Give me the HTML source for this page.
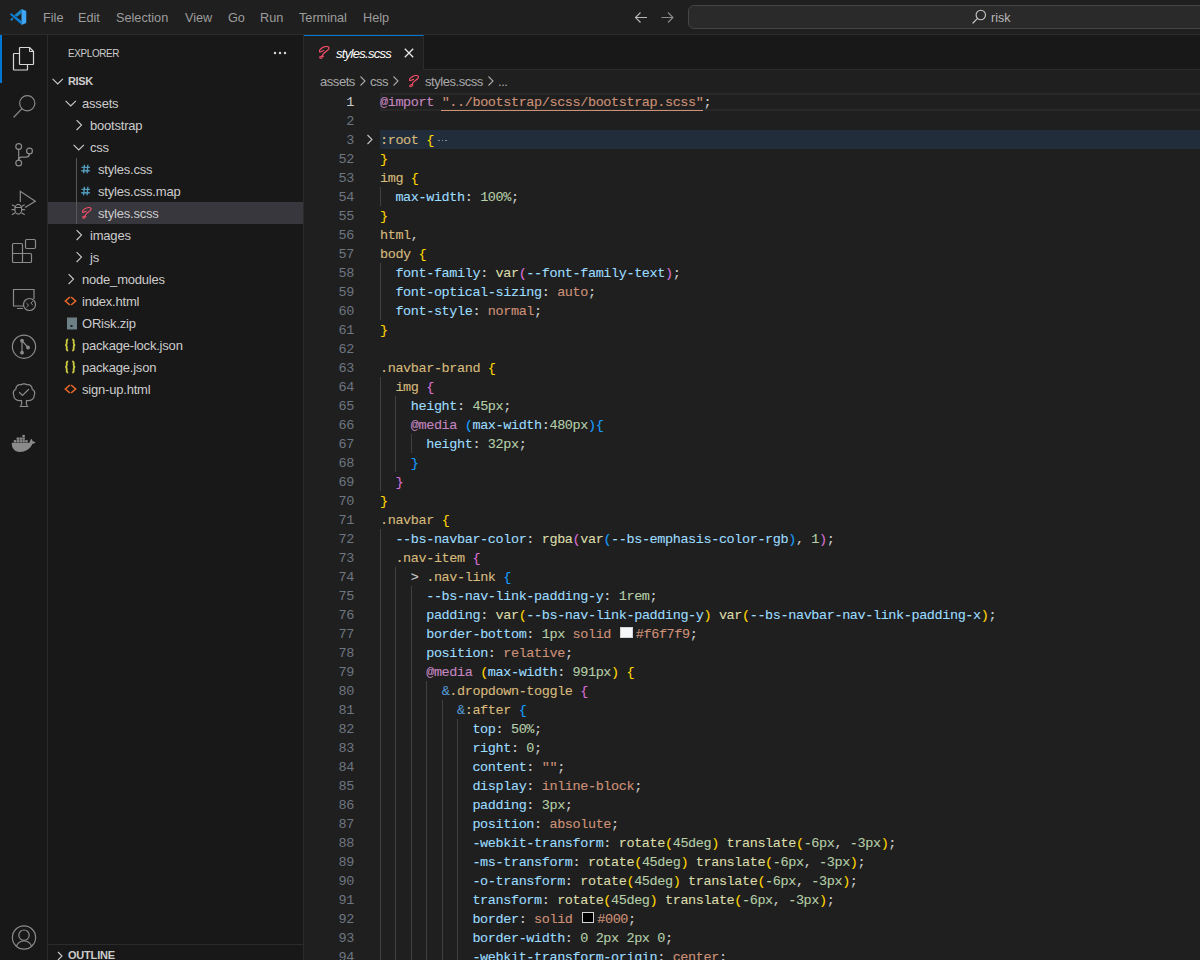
<!DOCTYPE html>
<html><head><meta charset="utf-8">
<style>
*{margin:0;padding:0;box-sizing:border-box}
html,body{width:1200px;height:960px;overflow:hidden;background:#1f1f1f}
body{font-family:"Liberation Sans",sans-serif;color:#cccccc;position:relative}
.abs{position:absolute}
svg{position:absolute;overflow:visible}
#title{left:0;top:0;width:1200px;height:35px;background:#1f1f1f;border-bottom:1px solid #2b2b2b}
#title .m{position:absolute;top:11px;font-size:12.7px;color:#9d9d9d;line-height:15px}
#search{position:absolute;left:688px;top:5px;width:540px;height:24px;border:1px solid #454545;border-radius:6px;background:#2a2a2a}
#act{left:0;top:35px;width:48px;height:925px;background:#181818;border-right:1px solid #2b2b2b}
#side{left:48px;top:35px;width:256px;height:925px;background:#181818;border-right:1px solid #2b2b2b}
#tabs{left:304px;top:35px;width:896px;height:35px;background:#181818;border-bottom:1px solid #2b2b2b}
#tab{position:absolute;left:0;top:0;width:120px;height:35px;background:#1f1f1f;border-top:1px solid #0078d4;border-right:1px solid #2b2b2b}
#bc{left:304px;top:70px;width:896px;height:22px;background:#1f1f1f}
#ed{left:304px;top:92px;width:896px;height:868px;background:#1f1f1f;overflow:hidden}
.row{position:absolute;left:0;width:255px;height:22px;font-size:13px;line-height:22px;color:#cccccc;white-space:nowrap;letter-spacing:-0.2px}
.ln{position:absolute;left:0;width:50px;text-align:right;font-family:"Liberation Mono",monospace;font-size:13.5px;letter-spacing:-0.4px;color:#6e7681;height:19px;line-height:20px;padding-top:1px}
.ln.act{color:#cccccc}
.cl{position:absolute;left:76px;font-family:"Liberation Mono",monospace;font-size:13.5px;letter-spacing:-0.4px;height:19px;line-height:20px;padding-top:1px;white-space:pre;color:#cccccc;-webkit-text-stroke:0.1px}
.ig{position:absolute;width:1px;height:19px;background:#404040}
.p{color:#9cdcfe}.s{color:#ce9178}.n{color:#b5cea8}.f{color:#dcdcaa}.t{color:#d7ba7d}.k{color:#c586c0}.b{color:#569cd6}
.g{color:#ffd700}.o{color:#da70d6}.u{color:#179fff}
.su{color:#ce9178}
.sw{display:inline-block;width:12.5px;height:11.5px;border:1px solid #d4d4d4;margin:0 3px 0 1.5px;vertical-align:0px}
.fold{display:inline-block;width:14px;height:10px;position:relative}.fold b{position:absolute;top:5.6px;width:1.6px;height:1.6px;background:#8b8b8b}.fold b:nth-child(1){left:4px}.fold b:nth-child(2){left:7.8px}.fold b:nth-child(3){left:11.5px}
.sh{position:absolute;font-size:11px;line-height:14px;color:#cccccc;letter-spacing:-0.65px}
.sh.b{font-weight:bold;letter-spacing:-0.2px}
.row .tx{position:absolute;top:1px}
.sel{background:#37373d}
.bt{position:absolute;top:1px;font-size:13px;line-height:22px;color:#a9a9a9;letter-spacing:-0.45px}
#lh{position:absolute;left:76px;top:1px;width:820px;height:18px;border:2px solid #282828;border-right:none}
#fb{position:absolute;left:76px;top:38px;width:820px;height:19px;background:#212d3a}
#ul{position:absolute;left:137px;top:18px;width:262px;height:1px;background:#ce9178}
.ai{fill:none;stroke:#8b8b8b;stroke-width:1.2}
</style></head><body>
<svg width="0" height="0" style="position:absolute"><defs>
<symbol id="scss" viewBox="0 0 11 13"><path d="M4.8 4.5 C3.2 4.8 0.7 6.8 0.4 5.3 C0.2 3.6 4 0.6 7.3 0.5 C10.2 0.4 10.7 2.3 9 3.9 C7.5 5.3 5.3 6.4 4.1 8.1 C3.3 9.3 3.9 10.8 2.9 11.8 C2.1 12.6 0.7 12.4 0.8 11.3 C0.9 10.2 2.8 9.8 4.2 10.4" stroke="#f14e67" stroke-width="1.2" fill="none" stroke-linecap="round"/></symbol>
<symbol id="hash" viewBox="0 0 10 10"><path d="M3.6 0.5 L2.8 9.5 M7.2 0.5 L6.4 9.5 M0.5 3.3 H9.5 M0.3 6.8 H9.3" stroke="#519aba" stroke-width="1.5" fill="none"/></symbol>
</defs></svg>
<div id="title" class="abs">
  <svg style="left:6px;top:6px" width="24" height="24" viewBox="0 0 24 24">
    <polygon points="15.5,3 15.5,7.25 11,10.75 8.25,9.25" fill="#1a86c8"/>
    <polygon points="4.25,13.5 5.75,15 7.5,12.5 6.25,11.5" fill="#1a86c8"/>
    <polygon points="5,7 15.5,15 15.5,18.75 4,8.5" fill="#0b7fd9"/>
    <polygon points="15.5,3 20.25,5 20.25,17 15.5,19" fill="#3ea6f5"/>
  </svg>
  <span class="m" style="left:43px">File</span>
  <span class="m" style="left:78px">Edit</span>
  <span class="m" style="left:116px">Selection</span>
  <span class="m" style="left:185px">View</span>
  <span class="m" style="left:228px">Go</span>
  <span class="m" style="left:260px">Run</span>
  <span class="m" style="left:299px">Terminal</span>
  <span class="m" style="left:363px">Help</span>
  <svg style="left:634px;top:10px" width="16" height="16"><path d="M1.5 7.5 H13 M6.5 2.5 L1.5 7.5 L6.5 12.5" stroke="#b8b8b8" stroke-width="1.1" fill="none"/></svg>
  <svg style="left:660px;top:10px" width="16" height="16"><path d="M1.5 7.5 H13 M8 2.5 L13 7.5 L8 12.5" stroke="#8a8a8a" stroke-width="1.1" fill="none"/></svg>
  <div id="search">
    <svg style="left:282px;top:3px" width="16" height="16"><circle cx="9.8" cy="6" r="4.7" stroke="#c8c8c8" stroke-width="1.1" fill="none"/><path d="M6.5 9.4 L2 14" stroke="#c8c8c8" stroke-width="1.2" stroke-linecap="round"/></svg>
    <span style="position:absolute;left:302px;top:5px;font-size:12.5px;line-height:15px;color:#b8b8b8">risk</span>
  </div>
</div>
<div id="act" class="abs">

<div style="position:absolute;left:0;top:0;width:2px;height:48px;background:#0078d4"></div>
<svg style="left:0;top:-35px" width="48" height="960" viewBox="0 0 48 960">
 <g fill="none" stroke="#d7d7d7" stroke-width="1.2" stroke-linejoin="round">
  <path d="M19.5 53.5 H14 Q13.5 53.5 13.5 54 V69.5 Q13.5 70 14 70 H27 Q27.5 70 27.5 69.5 V64.5"/>
  <path d="M20 47.5 H29.5 L33.5 51.5 V64 Q33.5 64.5 33 64.5 H20 Q19.5 64.5 19.5 64 V48 Q19.5 47.5 20 47.5 Z"/>
  <path d="M29.5 47.5 V51.5 H33.5" stroke-width="1"/>
 </g>
 <g class="ai" stroke-linecap="round">
  <circle cx="27.25" cy="103.25" r="7.6"/>
  <path d="M21.8 108.8 L14 117"/>
  <circle cx="18.7" cy="146.5" r="2.9"/>
  <circle cx="29.5" cy="151" r="2.9"/>
  <circle cx="18.7" cy="163" r="2.9"/>
  <path d="M18.7 149.4 V160.1"/>
  <path d="M29.5 153.9 C29.3 156 28 157.2 25.5 157.2 H21.7 C19.8 157.2 18.7 158.3 18.7 160"/>
  <path d="M20.3 201.5 V191.3 L35.3 201.3 L25.5 207.3"/>
  <ellipse cx="18.3" cy="209.3" rx="3.4" ry="4.9"/>
  <path d="M15 207.5 H21.6 M12.3 205 L14.8 206.3 M24.3 205 L21.8 206.3 M12 209.7 H14.6 M24.6 209.7 H22 M12.3 214.5 L14.8 213 M24.3 214.5 L21.8 213"/>
  <path d="M12.5 253.5 V261.5 Q12.5 262.5 13.5 262.5 H30.5 Q31.5 262.5 31.5 261.5 V254.5 Q31.5 253.5 30.5 253.5 H12.5 M12.5 253.5 V244.5 Q12.5 243.5 13.5 243.5 H21.5 Q22.5 243.5 22.5 244.5 V262.5"/>
  <rect x="25.5" y="239.5" width="10" height="9" rx="1.2"/>
  <path d="M23 306 H13.5 V289.5 H34 V298.5"/>
  <path d="M17.5 308.5 H22.5"/>
  <circle cx="29.5" cy="304.5" r="6"/>
  <path d="M26.8 303.4 L28.6 305.1 L26.8 306.8 M32.6 301.4 L30.8 303.1 L32.6 304.8" stroke-width="1"/>
  <circle cx="24" cy="346.7" r="11.6"/>
  <path d="M22 340.7 V352.7 M22 340.7 L28 347.5"/>
  <path d="M21.5 400.5 C17 401 13.5 399 13.8 395.5 C12.8 393 13.5 390.5 15.8 389.3 C15.8 386 18.5 384 21 384.8 C22 383.6 26 383.6 27 384.8 C29.5 384 32.2 386 32.2 389.3 C34.5 390.5 35.2 393 34.2 395.5 C34.5 399 31 401 26.5 400.5 C26 402.5 26 404.5 27.5 406.5 H20.5 C22 404.5 22 402.5 21.5 400.5 Z"/>
  <path d="M19.5 392.5 L22.5 395.5 L28.5 389.5"/>
  <circle cx="24" cy="937.5" r="11.6"/>
  <circle cx="24" cy="935.2" r="5.2"/>
  <path d="M16.5 946 C18 942.5 20.5 941 24 941 C27.5 941 30 942.5 31.5 946"/>
 </g>
 <g fill="#8b8b8b">
  <circle cx="22" cy="340.7" r="1.9"/><circle cx="28" cy="347.5" r="1.9"/><circle cx="22" cy="352.7" r="1.9"/>
  <path d="M11.75 442.8 H29.5 C30 441 30.5 439.5 31.5 438.8 C32.3 440 32.6 441 33 441.6 C34 441.6 35 441.8 35.5 442.5 C34.5 443.5 33.5 443.8 32.5 443.8 C30 449.5 25 452 20 452 C14.5 452 11.5 448 11.75 442.8 Z"/><rect x="13.8" y="440.1" width="2.45" height="2.3"/><rect x="16.65" y="440.1" width="2.45" height="2.3"/><rect x="19.5" y="440.1" width="2.45" height="2.3"/><rect x="22.35" y="440.1" width="2.45" height="2.3"/><rect x="25.2" y="440.1" width="2.45" height="2.3"/><rect x="16.65" y="437.5" width="2.45" height="2.3"/><rect x="19.5" y="437.5" width="2.45" height="2.3"/><rect x="22.35" y="437.5" width="2.45" height="2.3"/><rect x="22.35" y="434.9" width="2.45" height="2.3"/>
 </g>
</svg>

</div>
<div id="side" class="abs">
  <div class="sh" style="left:20px;top:11px;letter-spacing:-0.4px;transform:scaleX(0.9);transform-origin:0 0">EXPLORER</div>
  <svg style="left:225px;top:16px" width="14" height="4"><circle cx="2" cy="2" r="1.25" fill="#d0d0d0"/><circle cx="7" cy="2" r="1.25" fill="#d0d0d0"/><circle cx="12" cy="2" r="1.25" fill="#d0d0d0"/></svg>
  <div class="row" style="top:35px"><svg style="left:4px;top:0px" width="12" height="22"><path d="M0.6 8.9 L5.75 14 L10.9 8.9" stroke="#cccccc" stroke-width="1.1" fill="none"/></svg><span class="tx" style="left:20px;font-size:11px;font-weight:bold;top:0;letter-spacing:-0.4px">RISK</span></div>
<div class="row" style="top:57px"><svg style="left:17px;top:0px" width="12" height="22"><path d="M0.6 8.9 L5.75 14 L10.9 8.9" stroke="#cccccc" stroke-width="1.1" fill="none"/></svg><span class="tx" style="left:34px;">assets</span></div>
<div class="row" style="top:79px"><svg style="left:25px;top:0px" width="12" height="22"><path d="M3.6 6.2 L8.5 11.1 L3.6 16" stroke="#cccccc" stroke-width="1.1" fill="none"/></svg><span class="tx" style="left:42px;">bootstrap</span></div>
<div class="row" style="top:101px"><svg style="left:25px;top:0px" width="12" height="22"><path d="M0.6 8.9 L5.75 14 L10.9 8.9" stroke="#cccccc" stroke-width="1.1" fill="none"/></svg><span class="tx" style="left:42px;">css</span></div>
<div class="row" style="top:123px"><svg style="left:33.3px;top:6px" width="9.5" height="10"><use href="#hash"/></svg><span class="tx" style="left:50px;">styles.css</span></div>
<div class="row" style="top:145px"><svg style="left:33.3px;top:6px" width="9.5" height="10"><use href="#hash"/></svg><span class="tx" style="left:50px;">styles.css.map</span></div>
<div class="row sel" style="top:167px"><svg style="left:33.5px;top:5px" width="10" height="12"><use href="#scss"/></svg><span class="tx" style="left:50px;">styles.scss</span></div>
<div class="row" style="top:189px"><svg style="left:25px;top:0px" width="12" height="22"><path d="M3.6 6.2 L8.5 11.1 L3.6 16" stroke="#cccccc" stroke-width="1.1" fill="none"/></svg><span class="tx" style="left:42px;">images</span></div>
<div class="row" style="top:211px"><svg style="left:25px;top:0px" width="12" height="22"><path d="M3.6 6.2 L8.5 11.1 L3.6 16" stroke="#cccccc" stroke-width="1.1" fill="none"/></svg><span class="tx" style="left:42px;">js</span></div>
<div class="row" style="top:233px"><svg style="left:17px;top:0px" width="12" height="22"><path d="M3.6 6.2 L8.5 11.1 L3.6 16" stroke="#cccccc" stroke-width="1.1" fill="none"/></svg><span class="tx" style="left:34px;">node_modules</span></div>
<div class="row" style="top:255px"><svg style="left:0;top:0" width="30" height="22"><path d="M21.9 7 L17.4 11 L21.9 15 M23.1 7 L27.6 11 L23.1 15" stroke="#e8682a" stroke-width="1.6" fill="none"/></svg><span class="tx" style="left:34px;">index.html</span></div>
<div class="row" style="top:277px"><svg style="left:18px;top:5px" width="12" height="13" viewBox="0 0 12 13"><rect x="1" y="0.5" width="10" height="12" fill="#6d8086"/><rect x="4.5" y="8" width="2" height="2" fill="#1c1c1c"/></svg><span class="tx" style="left:34px;">ORisk.zip</span></div>
<div class="row" style="top:299px"><svg style="left:0;top:0" width="30" height="22"><path d="M20.2 5.4 C18.9 5.4 18.7 6 18.7 7.2 V9.6 C18.7 10.4 18 11 17.2 11 C18 11 18.7 11.6 18.7 12.4 V14.8 C18.7 16 18.9 16.6 20.2 16.6 M24.2 5.4 C25.5 5.4 25.7 6 25.7 7.2 V9.6 C25.7 10.4 26.4 11 27.2 11 C26.4 11 25.7 11.6 25.7 12.4 V14.8 C25.7 16 25.5 16.6 24.2 16.6" stroke="#cbcb41" stroke-width="1.8" fill="none"/></svg><span class="tx" style="left:34px;">package-lock.json</span></div>
<div class="row" style="top:321px"><svg style="left:0;top:0" width="30" height="22"><path d="M20.2 5.4 C18.9 5.4 18.7 6 18.7 7.2 V9.6 C18.7 10.4 18 11 17.2 11 C18 11 18.7 11.6 18.7 12.4 V14.8 C18.7 16 18.9 16.6 20.2 16.6 M24.2 5.4 C25.5 5.4 25.7 6 25.7 7.2 V9.6 C25.7 10.4 26.4 11 27.2 11 C26.4 11 25.7 11.6 25.7 12.4 V14.8 C25.7 16 25.5 16.6 24.2 16.6" stroke="#cbcb41" stroke-width="1.8" fill="none"/></svg><span class="tx" style="left:34px;">package.json</span></div>
<div class="row" style="top:343px"><svg style="left:0;top:0" width="30" height="22"><path d="M21.9 7 L17.4 11 L21.9 15 M23.1 7 L27.6 11 L23.1 15" stroke="#e8682a" stroke-width="1.6" fill="none"/></svg><span class="tx" style="left:34px;">sign-up.html</span></div>
<div style="position:absolute;left:28px;top:123px;width:1px;height:66px;background:#585858"></div>
  <div style="position:absolute;left:0;top:909px;width:255px;height:1px;background:#2b2b2b"></div>
  <svg style="left:6px;top:915px" width="12" height="12"><path d="M4 2 L8 6 L4 10" stroke="#ccc" stroke-width="1.1" fill="none"/></svg>
  <div class="sh b" style="left:20px;top:913px">OUTLINE</div>
</div>
<div id="tabs" class="abs"><div id="tab">
  <svg style="left:15px;top:10.25px" width="11" height="13"><use href="#scss"/></svg>
  <span style="position:absolute;left:32px;top:10px;font-size:13px;line-height:16px;font-style:italic;color:#ffffff;letter-spacing:-0.7px">styles.scss</span>
  <svg style="left:100px;top:12px" width="10" height="10"><path d="M0.8 0.8 L9.2 9.2 M9.2 0.8 L0.8 9.2" stroke="#e8e8e8" stroke-width="1.3"/></svg>
</div></div>
<div id="bc" class="abs">
  <span class="bt" style="left:16px">assets</span>
  <svg style="left:54px;top:3px" width="10" height="17"><path d="M2.5 3.5 L7 8 L2.5 12.5" stroke="#a9a9a9" stroke-width="1.1" fill="none"/></svg>
  <span class="bt" style="left:66px">css</span>
  <svg style="left:87px;top:3px" width="10" height="17"><path d="M2.5 3.5 L7 8 L2.5 12.5" stroke="#a9a9a9" stroke-width="1.1" fill="none"/></svg>
  <svg style="left:105px;top:5px" width="10.5" height="12.5"><use href="#scss"/></svg>
  <span class="bt" style="left:121px">styles.scss</span>
  <svg style="left:182px;top:3px" width="10" height="17"><path d="M2.5 3.5 L7 8 L2.5 12.5" stroke="#a9a9a9" stroke-width="1.1" fill="none"/></svg>
  <span class="bt" style="left:194px">...</span>
</div>
<div id="ed" class="abs">
<div id="lh"></div><div id="fb"></div><div id="ul"></div>
<svg style="left:60px;top:38px" width="12" height="19"><path d="M3.5 5 L8 9.5 L3.5 14" stroke="#c5c5c5" stroke-width="1.1" fill="none"/></svg>
<i class="ig" style="left:76px;top:95px"></i>
<i class="ig" style="left:76px;top:171px"></i>
<i class="ig" style="left:76px;top:190px"></i>
<i class="ig" style="left:76px;top:209px"></i>
<i class="ig" style="left:76px;top:285px"></i>
<i class="ig" style="left:76px;top:304px"></i>
<i class="ig" style="left:91px;top:304px"></i>
<i class="ig" style="left:76px;top:323px"></i>
<i class="ig" style="left:91px;top:323px"></i>
<i class="ig" style="left:76px;top:342px"></i>
<i class="ig" style="left:91px;top:342px"></i>
<i class="ig" style="left:107px;top:342px"></i>
<i class="ig" style="left:76px;top:361px"></i>
<i class="ig" style="left:91px;top:361px"></i>
<i class="ig" style="left:76px;top:380px"></i>
<i class="ig" style="left:76px;top:437px"></i>
<i class="ig" style="left:76px;top:456px"></i>
<i class="ig" style="left:76px;top:475px"></i>
<i class="ig" style="left:91px;top:475px"></i>
<i class="ig" style="left:76px;top:494px"></i>
<i class="ig" style="left:91px;top:494px"></i>
<i class="ig" style="left:107px;top:494px"></i>
<i class="ig" style="left:76px;top:513px"></i>
<i class="ig" style="left:91px;top:513px"></i>
<i class="ig" style="left:107px;top:513px"></i>
<i class="ig" style="left:76px;top:532px"></i>
<i class="ig" style="left:91px;top:532px"></i>
<i class="ig" style="left:107px;top:532px"></i>
<i class="ig" style="left:76px;top:551px"></i>
<i class="ig" style="left:91px;top:551px"></i>
<i class="ig" style="left:107px;top:551px"></i>
<i class="ig" style="left:76px;top:570px"></i>
<i class="ig" style="left:91px;top:570px"></i>
<i class="ig" style="left:107px;top:570px"></i>
<i class="ig" style="left:76px;top:589px"></i>
<i class="ig" style="left:91px;top:589px"></i>
<i class="ig" style="left:107px;top:589px"></i>
<i class="ig" style="left:122px;top:589px"></i>
<i class="ig" style="left:76px;top:608px"></i>
<i class="ig" style="left:91px;top:608px"></i>
<i class="ig" style="left:107px;top:608px"></i>
<i class="ig" style="left:122px;top:608px"></i>
<i class="ig" style="left:138px;top:608px"></i>
<i class="ig" style="left:76px;top:627px"></i>
<i class="ig" style="left:91px;top:627px"></i>
<i class="ig" style="left:107px;top:627px"></i>
<i class="ig" style="left:122px;top:627px"></i>
<i class="ig" style="left:138px;top:627px"></i>
<i class="ig" style="left:153px;top:627px"></i>
<i class="ig" style="left:76px;top:646px"></i>
<i class="ig" style="left:91px;top:646px"></i>
<i class="ig" style="left:107px;top:646px"></i>
<i class="ig" style="left:122px;top:646px"></i>
<i class="ig" style="left:138px;top:646px"></i>
<i class="ig" style="left:153px;top:646px"></i>
<i class="ig" style="left:76px;top:665px"></i>
<i class="ig" style="left:91px;top:665px"></i>
<i class="ig" style="left:107px;top:665px"></i>
<i class="ig" style="left:122px;top:665px"></i>
<i class="ig" style="left:138px;top:665px"></i>
<i class="ig" style="left:153px;top:665px"></i>
<i class="ig" style="left:76px;top:684px"></i>
<i class="ig" style="left:91px;top:684px"></i>
<i class="ig" style="left:107px;top:684px"></i>
<i class="ig" style="left:122px;top:684px"></i>
<i class="ig" style="left:138px;top:684px"></i>
<i class="ig" style="left:153px;top:684px"></i>
<i class="ig" style="left:76px;top:703px"></i>
<i class="ig" style="left:91px;top:703px"></i>
<i class="ig" style="left:107px;top:703px"></i>
<i class="ig" style="left:122px;top:703px"></i>
<i class="ig" style="left:138px;top:703px"></i>
<i class="ig" style="left:153px;top:703px"></i>
<i class="ig" style="left:76px;top:722px"></i>
<i class="ig" style="left:91px;top:722px"></i>
<i class="ig" style="left:107px;top:722px"></i>
<i class="ig" style="left:122px;top:722px"></i>
<i class="ig" style="left:138px;top:722px"></i>
<i class="ig" style="left:153px;top:722px"></i>
<i class="ig" style="left:76px;top:741px"></i>
<i class="ig" style="left:91px;top:741px"></i>
<i class="ig" style="left:107px;top:741px"></i>
<i class="ig" style="left:122px;top:741px"></i>
<i class="ig" style="left:138px;top:741px"></i>
<i class="ig" style="left:153px;top:741px"></i>
<i class="ig" style="left:76px;top:760px"></i>
<i class="ig" style="left:91px;top:760px"></i>
<i class="ig" style="left:107px;top:760px"></i>
<i class="ig" style="left:122px;top:760px"></i>
<i class="ig" style="left:138px;top:760px"></i>
<i class="ig" style="left:153px;top:760px"></i>
<i class="ig" style="left:76px;top:779px"></i>
<i class="ig" style="left:91px;top:779px"></i>
<i class="ig" style="left:107px;top:779px"></i>
<i class="ig" style="left:122px;top:779px"></i>
<i class="ig" style="left:138px;top:779px"></i>
<i class="ig" style="left:153px;top:779px"></i>
<i class="ig" style="left:76px;top:798px"></i>
<i class="ig" style="left:91px;top:798px"></i>
<i class="ig" style="left:107px;top:798px"></i>
<i class="ig" style="left:122px;top:798px"></i>
<i class="ig" style="left:138px;top:798px"></i>
<i class="ig" style="left:153px;top:798px"></i>
<i class="ig" style="left:76px;top:817px"></i>
<i class="ig" style="left:91px;top:817px"></i>
<i class="ig" style="left:107px;top:817px"></i>
<i class="ig" style="left:122px;top:817px"></i>
<i class="ig" style="left:138px;top:817px"></i>
<i class="ig" style="left:153px;top:817px"></i>
<i class="ig" style="left:76px;top:836px"></i>
<i class="ig" style="left:91px;top:836px"></i>
<i class="ig" style="left:107px;top:836px"></i>
<i class="ig" style="left:122px;top:836px"></i>
<i class="ig" style="left:138px;top:836px"></i>
<i class="ig" style="left:153px;top:836px"></i>
<i class="ig" style="left:76px;top:855px"></i>
<i class="ig" style="left:91px;top:855px"></i>
<i class="ig" style="left:107px;top:855px"></i>
<i class="ig" style="left:122px;top:855px"></i>
<i class="ig" style="left:138px;top:855px"></i>
<i class="ig" style="left:153px;top:855px"></i>
<div class="ln act" style="top:0px">1</div><div class="cl" style="top:0px"><span class="k">@import</span> <span class="s">&quot;</span><span class="su">../bootstrap/scss/bootstrap.scss</span><span class="s">&quot;</span>;</div>
<div class="ln" style="top:19px">2</div><div class="cl" style="top:19px"></div>
<div class="ln" style="top:38px">3</div><div class="cl" style="top:38px"><span class="t">:root</span> <span class="g">{</span><i class="fold"><b></b><b></b><b></b></i></div>
<div class="ln" style="top:57px">52</div><div class="cl" style="top:57px"><span class="g">}</span></div>
<div class="ln" style="top:76px">53</div><div class="cl" style="top:76px"><span class="t">img</span> <span class="g">{</span></div>
<div class="ln" style="top:95px">54</div><div class="cl" style="top:95px">  <span class="p">max-width</span>: <span class="n">100%</span>;</div>
<div class="ln" style="top:114px">55</div><div class="cl" style="top:114px"><span class="g">}</span></div>
<div class="ln" style="top:133px">56</div><div class="cl" style="top:133px"><span class="t">html</span>,</div>
<div class="ln" style="top:152px">57</div><div class="cl" style="top:152px"><span class="t">body</span> <span class="g">{</span></div>
<div class="ln" style="top:171px">58</div><div class="cl" style="top:171px">  <span class="p">font-family</span>: <span class="f">var</span><span class="o">(</span><span class="p">--font-family-text</span><span class="o">)</span>;</div>
<div class="ln" style="top:190px">59</div><div class="cl" style="top:190px">  <span class="p">font-optical-sizing</span>: <span class="s">auto</span>;</div>
<div class="ln" style="top:209px">60</div><div class="cl" style="top:209px">  <span class="p">font-style</span>: <span class="s">normal</span>;</div>
<div class="ln" style="top:228px">61</div><div class="cl" style="top:228px"><span class="g">}</span></div>
<div class="ln" style="top:247px">62</div><div class="cl" style="top:247px"></div>
<div class="ln" style="top:266px">63</div><div class="cl" style="top:266px"><span class="t">.navbar-brand</span> <span class="g">{</span></div>
<div class="ln" style="top:285px">64</div><div class="cl" style="top:285px">  <span class="t">img</span> <span class="o">{</span></div>
<div class="ln" style="top:304px">65</div><div class="cl" style="top:304px">    <span class="p">height</span>: <span class="n">45px</span>;</div>
<div class="ln" style="top:323px">66</div><div class="cl" style="top:323px">    <span class="k">@media</span> <span class="u">(</span><span class="p">max-width</span>:<span class="n">480px</span><span class="u">){</span></div>
<div class="ln" style="top:342px">67</div><div class="cl" style="top:342px">      <span class="p">height</span>: <span class="n">32px</span>;</div>
<div class="ln" style="top:361px">68</div><div class="cl" style="top:361px">    <span class="u">}</span></div>
<div class="ln" style="top:380px">69</div><div class="cl" style="top:380px">  <span class="o">}</span></div>
<div class="ln" style="top:399px">70</div><div class="cl" style="top:399px"><span class="g">}</span></div>
<div class="ln" style="top:418px">71</div><div class="cl" style="top:418px"><span class="t">.navbar</span> <span class="g">{</span></div>
<div class="ln" style="top:437px">72</div><div class="cl" style="top:437px">  <span class="p">--bs-navbar-color</span>: <span class="f">rgba</span><span class="o">(</span><span class="f">var</span><span class="u">(</span><span class="p">--bs-emphasis-color-rgb</span><span class="u">)</span>, <span class="n">1</span><span class="o">)</span>;</div>
<div class="ln" style="top:456px">73</div><div class="cl" style="top:456px">  <span class="t">.nav-item</span> <span class="o">{</span></div>
<div class="ln" style="top:475px">74</div><div class="cl" style="top:475px">    &gt; <span class="t">.nav-link</span> <span class="u">{</span></div>
<div class="ln" style="top:494px">75</div><div class="cl" style="top:494px">      <span class="p">--bs-nav-link-padding-y</span>: <span class="n">1rem</span>;</div>
<div class="ln" style="top:513px">76</div><div class="cl" style="top:513px">      <span class="p">padding</span>: <span class="f">var</span><span class="g">(</span><span class="p">--bs-nav-link-padding-y</span><span class="g">)</span> <span class="f">var</span><span class="g">(</span><span class="p">--bs-navbar-nav-link-padding-x</span><span class="g">)</span>;</div>
<div class="ln" style="top:532px">77</div><div class="cl" style="top:532px">      <span class="p">border-bottom</span>: <span class="n">1px</span> <span class="s">solid</span> <i class="sw" style="background:#f6f7f9"></i><span class="s">#f6f7f9</span>;</div>
<div class="ln" style="top:551px">78</div><div class="cl" style="top:551px">      <span class="p">position</span>: <span class="s">relative</span>;</div>
<div class="ln" style="top:570px">79</div><div class="cl" style="top:570px">      <span class="k">@media</span> <span class="g">(</span><span class="p">max-width</span>: <span class="n">991px</span><span class="g">)</span> <span class="g">{</span></div>
<div class="ln" style="top:589px">80</div><div class="cl" style="top:589px">        <span class="b">&amp;</span><span class="t">.dropdown-toggle</span> <span class="o">{</span></div>
<div class="ln" style="top:608px">81</div><div class="cl" style="top:608px">          <span class="b">&amp;</span><span class="t">:after</span> <span class="u">{</span></div>
<div class="ln" style="top:627px">82</div><div class="cl" style="top:627px">            <span class="p">top</span>: <span class="n">50%</span>;</div>
<div class="ln" style="top:646px">83</div><div class="cl" style="top:646px">            <span class="p">right</span>: <span class="n">0</span>;</div>
<div class="ln" style="top:665px">84</div><div class="cl" style="top:665px">            <span class="p">content</span>: <span class="s">&quot;&quot;</span>;</div>
<div class="ln" style="top:684px">85</div><div class="cl" style="top:684px">            <span class="p">display</span>: <span class="s">inline-block</span>;</div>
<div class="ln" style="top:703px">86</div><div class="cl" style="top:703px">            <span class="p">padding</span>: <span class="n">3px</span>;</div>
<div class="ln" style="top:722px">87</div><div class="cl" style="top:722px">            <span class="p">position</span>: <span class="s">absolute</span>;</div>
<div class="ln" style="top:741px">88</div><div class="cl" style="top:741px">            <span class="p">-webkit-transform</span>: <span class="f">rotate</span><span class="g">(</span><span class="n">45deg</span><span class="g">)</span> <span class="f">translate</span><span class="g">(</span><span class="n">-6px</span>, <span class="n">-3px</span><span class="g">)</span>;</div>
<div class="ln" style="top:760px">89</div><div class="cl" style="top:760px">            <span class="p">-ms-transform</span>: <span class="f">rotate</span><span class="g">(</span><span class="n">45deg</span><span class="g">)</span> <span class="f">translate</span><span class="g">(</span><span class="n">-6px</span>, <span class="n">-3px</span><span class="g">)</span>;</div>
<div class="ln" style="top:779px">90</div><div class="cl" style="top:779px">            <span class="p">-o-transform</span>: <span class="f">rotate</span><span class="g">(</span><span class="n">45deg</span><span class="g">)</span> <span class="f">translate</span><span class="g">(</span><span class="n">-6px</span>, <span class="n">-3px</span><span class="g">)</span>;</div>
<div class="ln" style="top:798px">91</div><div class="cl" style="top:798px">            <span class="p">transform</span>: <span class="f">rotate</span><span class="g">(</span><span class="n">45deg</span><span class="g">)</span> <span class="f">translate</span><span class="g">(</span><span class="n">-6px</span>, <span class="n">-3px</span><span class="g">)</span>;</div>
<div class="ln" style="top:817px">92</div><div class="cl" style="top:817px">            <span class="p">border</span>: <span class="s">solid</span> <i class="sw" style="background:#000"></i><span class="s">#000</span>;</div>
<div class="ln" style="top:836px">93</div><div class="cl" style="top:836px">            <span class="p">border-width</span>: <span class="n">0 2px 2px 0</span>;</div>
<div class="ln" style="top:855px">94</div><div class="cl" style="top:855px">            <span class="p">-webkit-transform-origin</span>: <span class="s">center</span>;</div>
</div>
</body></html>
